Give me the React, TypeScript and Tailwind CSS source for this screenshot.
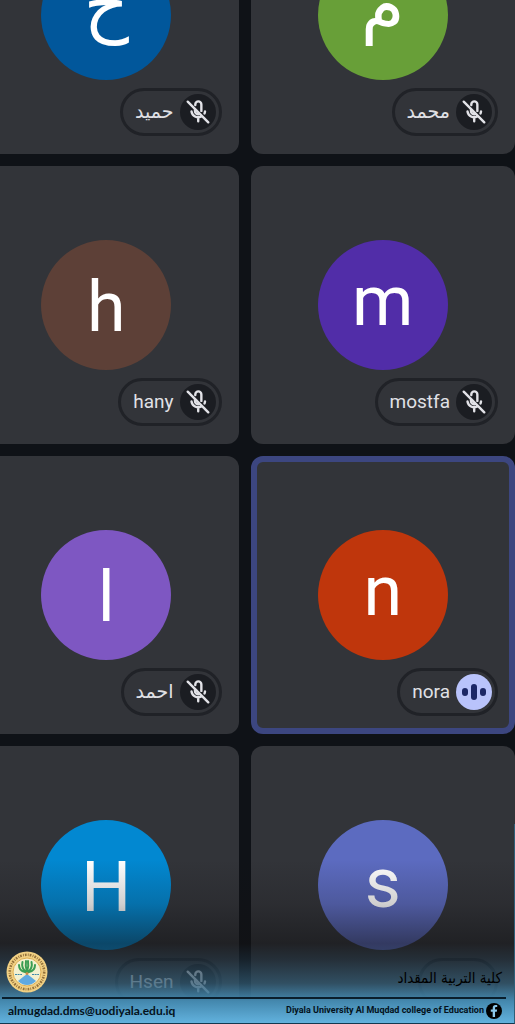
import { clsx } from 'clsx';
import { FaFacebookF } from 'react-icons/fa';

type Participant = {
  name: string;
  initial: string;
  color: string;
  // nudges the letter so its ink sits in the middle of the circle
  align: string;
  speaking?: boolean;
};

const participants: Participant[] = [
  { name: 'حميد', initial: 'ح', color: 'bg-[#01579b]', align: 'pb-5' },
  { name: 'محمد', initial: 'م', color: 'bg-[#689f38]', align: 'pb-5' },
  { name: 'hany', initial: 'h', color: 'bg-[#5d4037]', align: 'pt-1' },
  { name: 'mostfa', initial: 'm', color: 'bg-[#512da8]', align: 'pb-2' },
  { name: 'احمد', initial: 'ا', color: 'bg-[#7e57c2]', align: 'pt-1' },
  { name: 'nora', initial: 'n', color: 'bg-[#bf360c]', align: 'pb-2', speaking: true },
  { name: 'Hsen', initial: 'H', color: 'bg-[#0288d1]', align: 'pt-1' },
  { name: '', initial: 's', color: 'bg-[#5c6bc0]', align: 'pb-1' },
];

function MicOff() {
  return (
    <span className="flex size-9 items-center justify-center rounded-full bg-[#1b1d22]">
      <svg viewBox="0 0 24 24" className="size-[26px]" fill="none" stroke="#e3e3e8" strokeWidth="2.200" strokeLinecap="round">
        <path d="M9.500 5.500V5a2.800 2.800 0 0 1 5.600 0v6" />
        <path d="M9.200 10V11a3 3 0 0 0 3.800 2.900" />
        <path d="M6 11.500a6.300 6.300 0 0 0 9 4.700M18.500 11.500a6 6 0 0 1-.5 1.800M12.200 17V20.500" />
        <path d="M2.500 2.500l19 19" />
      </svg>
    </span>
  );
}

function Speaking() {
  return (
    <span className="flex size-9 items-center justify-center gap-[3px] rounded-full bg-[#b9c3fb]">
      <span className="h-2 w-1.5 rounded-full bg-[#1c2766]" />
      <span className="h-4 w-1.5 rounded-full bg-[#1c2766]" />
      <span className="h-2 w-1.5 rounded-full bg-[#1c2766]" />
    </span>
  );
}

function Tile({ person }: { person: Participant }) {
  return (
    <article
      className={clsx(
        'relative flex items-center justify-center rounded-xl bg-[#323439]',
        person.speaking && 'border-[6px] border-[#3c4680]',
      )}
    >
      <div
        className={clsx(
          'flex size-[130px] items-center justify-center rounded-full text-[70px] leading-none text-white',
          person.color,
          person.align,
        )}
      >
        {person.initial}
      </div>
      {person.name ? (
        <div
          className={clsx(
            'absolute flex h-12 items-center gap-1.5 rounded-full border-[3px] border-[#202227] pr-[3px] pl-3 text-[19px] text-[#e0e1e6]',
            person.speaking ? 'right-[11px] bottom-3' : 'right-[17px] bottom-[18px]',
          )}
        >
          <span>{person.name}</span>
          {person.speaking ? <Speaking /> : <MicOff />}
        </div>
      ) : (
        <div className="absolute right-[17px] bottom-[18px] h-12 w-20 rounded-full border-[3px] border-[#202227]" />
      )}
    </article>
  );
}

function Seal() {
  return (
    <svg viewBox="0 0 42 42" className="size-[42px]" role="img" aria-label="College seal">
      <circle cx="21" cy="21" r="20.500" fill="#f1d083" />
      <circle cx="21" cy="21" r="17.200" fill="none" stroke="#94713a" strokeWidth="2.600" strokeDasharray="1.700 1.300 0.800 1.100" />
      <circle cx="21" cy="21" r="14" fill="#f3f0cf" stroke="#e0ae50" />
      <path d="M12 30l5-4 4-3 4 3 5 4q-4 4-9 4t-9-4z" fill="#5fa9e0" />
      <path d="M19 21Q13 20 13 14M20 21Q15 17 16.500 11M21 21Q19 15 20 10M21 21Q23 15 22 10M22 21Q27 17 25.500 11M23 21Q29 20 29 14" fill="none" stroke="#3a9d53" strokeWidth="2" strokeLinecap="round" />
      <path d="M9 23.500h7M26 23.500h7" stroke="#3f88a8" strokeWidth="1.200" strokeDasharray="2 0.600" />
      <circle cx="21" cy="22.500" r="1.500" fill="#c98a4a" />
    </svg>
  );
}

function Footer() {
  return (
    <footer className="absolute inset-x-0 bottom-0 flex h-[200px] flex-col justify-end border-r border-b border-r-[#2f5f78] border-b-[#12384f] bg-[linear-gradient(to_bottom,rgba(20,18,20,0)_18%,rgba(20,18,20,0.200)_40%,rgba(18,18,20,0.550)_60%,rgba(28,44,56,0.600)_68%,rgba(48,88,112,0.750)_80%,#4488ae_89%,#62b2de_100%)]">
      <div className="flex items-center justify-between pr-3 pb-1 pl-1.5">
        <Seal />
        <span dir="rtl" className="pt-3 font-['DejaVu_Sans_Condensed','DejaVu_Sans',sans-serif] text-[15px] leading-6 text-black">
          كلية التربية المقداد
        </span>
      </div>
      <div className="mr-2 ml-0.5 h-0.5 bg-[#04141f]/90" />
      <div className="flex h-6 items-center justify-between pr-3 pl-2 text-[#04121c]">
        <a href="mailto:almugdad.dms@uodiyala.edu.iq" className="font-['Lato',sans-serif] text-[12px] font-bold">
          almugdad.dms@uodiyala.edu.iq
        </a>
        <a href="#facebook" className="flex items-center gap-0.5 font-['Roboto',sans-serif] text-[9px] font-bold">
          Diyala University Al Muqdad college of Education
          <span className="flex size-4 items-center justify-center rounded-full bg-black text-[#8cc8ea]">
            <FaFacebookF className="size-3" />
          </span>
        </a>
      </div>
    </footer>
  );
}

export default function App() {
  return (
    <main className="relative overflow-hidden bg-[#0f1217] font-[Roboto,'DejaVu_Sans',sans-serif]">
      <section className="-mt-[124px] -ml-[26px] grid auto-rows-[278px] grid-cols-2 gap-3">
        {participants.map((person) => (
          <Tile key={person.initial} person={person} />
        ))}
      </section>
      <Footer />
    </main>
  );
}
